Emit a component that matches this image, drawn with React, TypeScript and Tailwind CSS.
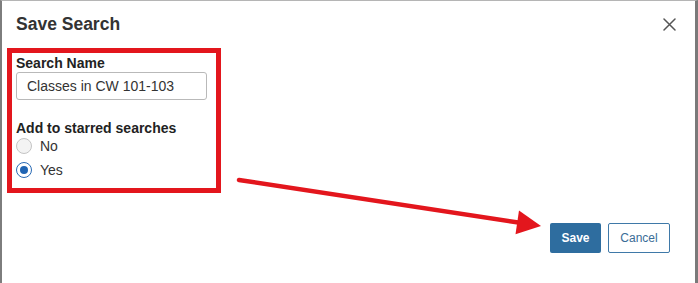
import React from "react";

export default function App() {
  return (
    <div
      className="relative w-[698px] h-[283px] bg-white border-l-2 border-t border-r-[3px] border-l-[#7d7d7d] border-t-[#b5b5b5] border-r-[#7a7a7a] overflow-hidden"
      style={{ fontFamily: '"Liberation Sans", Arial, sans-serif' }}
    >
      {/* Header */}
      <div className="flex items-start justify-between pl-[14px] pr-[19px] pt-[13px]">
        <h2 className="text-[17.5px] leading-[20px] font-bold text-[#333333]">Save Search</h2>
        <button className="mt-[4px] w-[13px] h-[13px] flex items-center justify-center" aria-label="Close">
          <svg width="13" height="13" viewBox="0 0 13 13">
            <path d="M1 1 L12 12 M12 1 L1 12" stroke="#555555" strokeWidth="1.5" strokeLinecap="round" />
          </svg>
        </button>
      </div>

      {/* Body */}
      <div className="pl-[14px] mt-[21px] flex flex-col">
        <label className="text-[14px] leading-[16px] font-bold text-[#222222]">Search Name</label>
        <input
          className="mt-[1px] w-[191px] h-[28px] border border-[#b9b9b9] rounded-[3px] pl-[10px] text-[14px] text-[#333333] outline-none"
          defaultValue="Classes in CW 101-103"
          style={{ fontFamily: '"Liberation Sans", Arial, sans-serif' }}
        />
        <div className="mt-[20px] text-[14px] leading-[16px] font-bold text-[#222222]">Add to starred searches</div>
        <div className="-mt-[1px] flex flex-col gap-[2px]">
          <div className="h-[22px] flex items-center">
            <span className="w-[16px] h-[16px] rounded-full border border-[#c4c4c4] bg-[#f3f3f3]" />
            <span className="ml-[8px] text-[14px] text-[#333333]">No</span>
          </div>
          <div className="h-[22px] flex items-center">
            <span className="w-[16px] h-[16px] rounded-full border border-[#2a6bb5] bg-white flex items-center justify-center">
              <span className="w-[8px] h-[8px] rounded-full bg-[#1f64b3]" />
            </span>
            <span className="ml-[8px] text-[14px] text-[#333333]">Yes</span>
          </div>
        </div>
      </div>

      {/* Footer */}
      <div className="mt-[42px] flex justify-end gap-[7px] pr-[25px]">
        <button className="w-[51px] h-[30px] rounded-[2px] bg-[#2e6d9f] text-white text-[12px] font-bold">Save</button>
        <button className="w-[62px] h-[30px] rounded-[2px] bg-white border border-[#3f79a8] text-[#3a6d97] text-[12px]">Cancel</button>
      </div>

      {/* Annotation: red box */}
      <div className="absolute left-[5px] top-[47px] w-[214px] h-[145px] border-[5px] border-[#e3161d] pointer-events-none" />

      {/* Annotation: arrow */}
      <svg
        className="absolute left-[-2px] top-[-1px] pointer-events-none"
        width="698"
        height="283"
        viewBox="0 0 698 283"
      >
        <line x1="239" y1="180" x2="520" y2="222.8" stroke="#e3161d" strokeWidth="4.5" strokeLinecap="round" />
        <polygon points="541,226 519,210.5 515.5,234.3" fill="#e3161d" />
      </svg>
    </div>
  );
}
